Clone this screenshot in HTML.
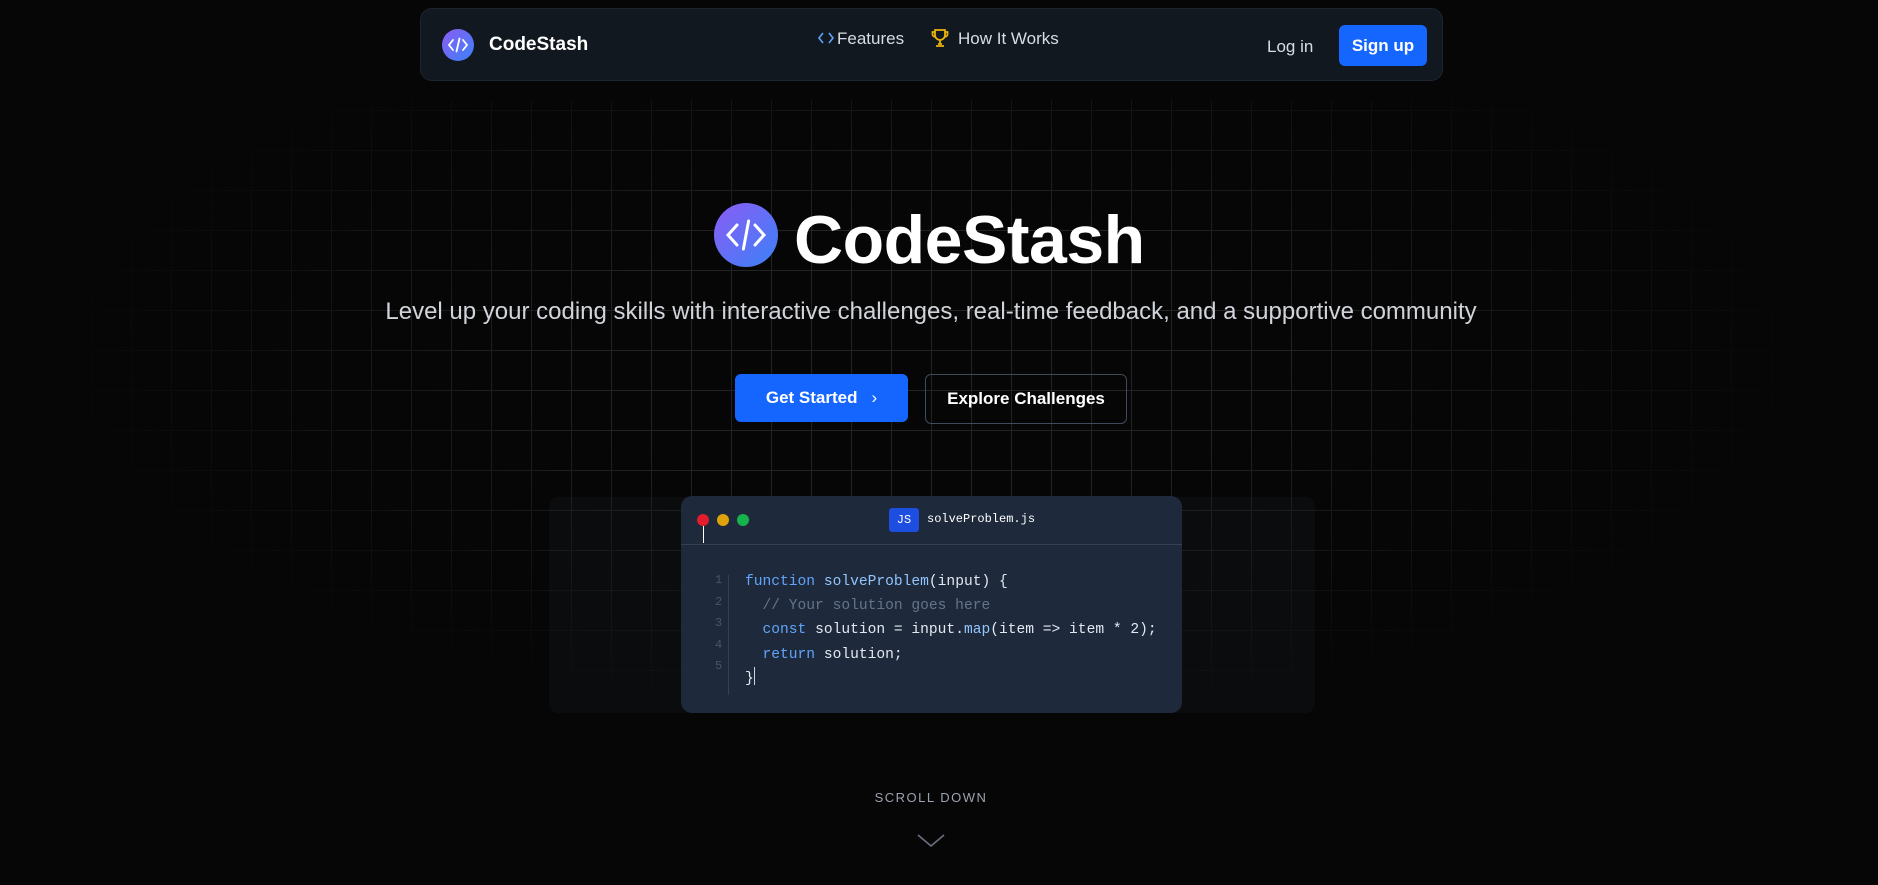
<!DOCTYPE html>
<html><head><meta charset="utf-8"><style>
*{margin:0;padding:0;box-sizing:border-box}
html,body{width:1878px;height:885px;overflow:hidden;background:#060606;font-family:"Liberation Sans",sans-serif;color:#fff}
.wrap{position:absolute;left:0;top:0;width:1862px;height:885px}
.grid{position:absolute;left:40px;top:100px;width:1780px;height:640px;
background-image:linear-gradient(to right,#232323 1px,transparent 1px),linear-gradient(to bottom,#232323 1px,transparent 1px);
background-size:40px 40px;background-position:11px 10px;
-webkit-mask-image:radial-gradient(ellipse 50% 58% at 50% 40%,#000 40%,transparent 100%);mask-image:radial-gradient(ellipse 50% 58% at 50% 40%,#000 40%,transparent 100%)}
nav{position:absolute;left:420px;top:8px;width:1023px;height:73px;background:#111820;border:1px solid #1d2530;border-radius:12px}
.lg{position:absolute;border-radius:50%;background:linear-gradient(135deg,#8b5cf6,#3b82f6)}
.navt{position:absolute;font-size:17px;color:#d8dde4;font-weight:bold}
.btn{position:absolute;border-radius:6px;font-weight:bold;display:flex;align-items:center;justify-content:center}
.card{position:absolute;left:681px;top:496px;width:501px;height:217px;background:#1e293b;border-radius:11px}
.code{position:absolute;font-family:"Liberation Mono",monospace;font-size:14.6px;white-space:pre;color:#e2e8f0}
.ln{position:absolute;left:34px;font-family:"Liberation Mono",monospace;font-size:12px;color:#4b5563}
.k{color:#60a5fa}.f{color:#93c5fd}.c{color:#64748b}
</style></head><body><div class="wrap">
<div class="grid"></div>
<nav>
<div class="lg" style="left:21px;top:20px;width:32px;height:32px"><svg width="32" height="32" viewBox="0 0 32 32" fill="none" stroke="#fff" stroke-width="1.8" stroke-linecap="round"><path d="M11 11l-4 5 4 5M21 11l4 5-4 5M17.5 9.5l-3 13"/></svg></div>
<div class="navt" style="left:68px;top:25px;color:#fff;font-size:19px">CodeStash</div>
<svg style="position:absolute;left:397px;top:21px" width="16" height="16" viewBox="0 0 16 16" fill="none" stroke="#60a5fa" stroke-width="1.6"><path d="M5 3L1 8l4 5M11 3l4 5-4 5"/></svg>
<div class="navt" style="left:416px;top:20px;font-weight:normal;color:#d8dde4">Features</div>
<svg style="position:absolute;left:510px;top:19px" width="18" height="20" viewBox="0 0 18 20" fill="none" stroke="#eab308" stroke-width="1.8"><path d="M4 2h10v5a5 5 0 0 1-10 0zM4 4H1.5v2a3 3 0 0 0 2.8 3M14 4h2.5v2a3 3 0 0 1-2.8 3M9 12v4M5 18h8M7 16h4"/></svg>
<div class="navt" style="left:537px;top:20px;font-weight:normal">How It Works</div>
<div class="navt" style="left:846px;top:28px;font-weight:normal">Log in</div>
<div class="btn" style="left:918px;top:16px;width:88px;height:41px;background:#1565ff;font-size:17px">Sign up</div>
</nav>
<div class="lg" style="left:714px;top:203px;width:64px;height:64px"><svg width="64" height="64" viewBox="0 0 32 32" fill="none" stroke="#fff" stroke-width="1.5" stroke-linecap="round"><path d="M11.5 11l-4.5 5 4.5 5M20.5 11l4.5 5-4.5 5M17.3 9l-2.6 14"/></svg></div>
<div style="position:absolute;left:794px;top:200px;font-size:68px;font-weight:bold;line-height:80px;letter-spacing:-0.5px">CodeStash</div>
<div style="position:absolute;left:0;width:1862px;top:298px;text-align:center;font-size:24px;color:#d1d5db">Level up your coding skills with interactive challenges, real-time feedback, and a supportive community</div>
<div class="btn" style="left:735px;top:374px;width:173px;height:48px;background:#1565ff;font-size:17px">Get Started <span style="margin-left:14px;font-weight:normal">&#x203A;</span></div>
<div class="btn" style="left:925px;top:374px;width:202px;height:50px;border:1px solid #3f4b5a;font-size:17px">Explore Challenges</div>
<div style="position:absolute;left:549px;top:497px;width:766px;height:216px;background:rgba(40,45,55,0.18);border-radius:10px"></div>
<div class="card">
<div style="position:absolute;left:16px;top:18px;width:12px;height:12px;border-radius:50%;background:#e11d2e"></div>
<div style="position:absolute;left:22px;top:30px;width:1px;height:17px;background:#fff"></div>
<div style="position:absolute;left:36px;top:18px;width:12px;height:12px;border-radius:50%;background:#e0a10a"></div>
<div style="position:absolute;left:56px;top:18px;width:12px;height:12px;border-radius:50%;background:#16b34a"></div>
<div style="position:absolute;left:208px;top:12px;width:30px;height:24px;background:#1d4ee0;border-radius:3px;font-family:'Liberation Mono',monospace;font-size:12px;display:flex;align-items:center;justify-content:center">JS</div>
<div style="position:absolute;left:246px;top:16px;font-family:'Liberation Mono',monospace;font-size:12px">solveProblem.js</div>
<div style="position:absolute;left:0;top:48px;width:100%;height:1px;background:#334155"></div>
<div style="position:absolute;left:47px;top:79px;width:1px;height:120px;background:#334155"></div>
<div class="ln" style="top:77px">1</div><div class="ln" style="top:99px">2</div><div class="ln" style="top:120px">3</div><div class="ln" style="top:142px">4</div><div class="ln" style="top:163px">5</div>
<div class="code" style="left:64px;top:74px;line-height:24.2px"><span class="k">function</span> <span class="f">solveProblem</span>(input) {
  <span class="c">// Your solution goes here</span>
  <span class="k">const</span> solution = input.<span class="f">map</span>(item =&gt; item * 2);
  <span class="k">return</span> solution;
}<span style="display:inline-block;width:1px;height:18px;background:#cbd5e1;vertical-align:-3px"></span></div>
</div>
<div style="position:absolute;left:0;width:1862px;top:790px;text-align:center;font-size:13px;letter-spacing:1.5px;color:#9ca3af">SCROLL DOWN</div>
<svg style="position:absolute;left:917px;top:834px" width="28" height="14" viewBox="0 0 28 14" fill="none" stroke="#6b7280" stroke-width="1.6"><path d="M1 1l13 11L27 1"/></svg>
</div></body></html>
